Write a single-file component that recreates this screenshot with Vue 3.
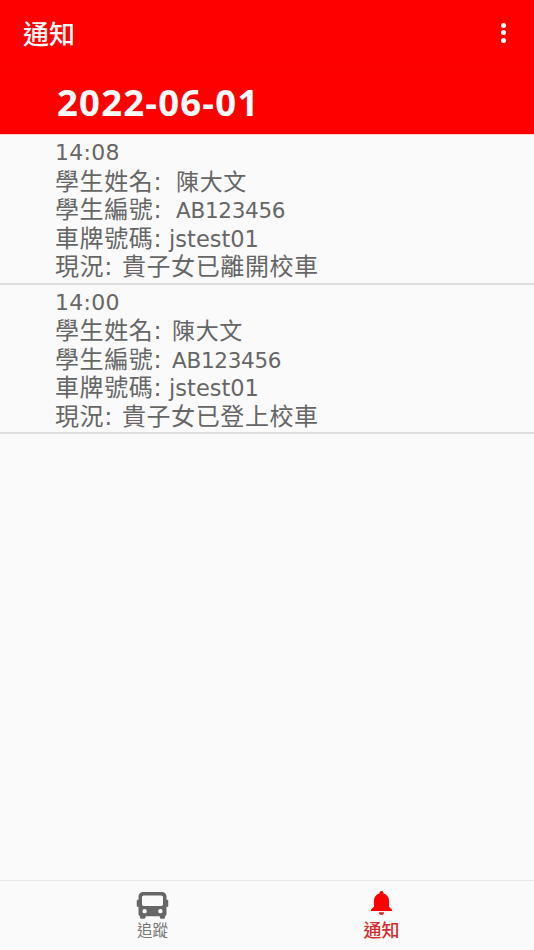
<template>
  <div class="page">
    <header class="app-bar">
      <span class="app-title">通知</span>
      <div class="more">
        <i></i><i></i><i></i>
      </div>
    </header>
    <div class="date-bar">2022-06-01</div>

    <main class="list">
      <div v-for="item in items" :key="item.time" class="item">
        <div class="row time">{{ item.time }}</div>
        <div class="row">學生姓名:<span class="name" :style="{ marginLeft: item.gap + 'px' }">陳大文</span></div>
        <div class="row">學生編號:<span class="code" :style="{ marginLeft: item.gap + 'px' }">AB123456</span></div>
        <div class="row">車牌號碼:<span class="plate">jstest01</span></div>
        <div class="row">現況:<span class="status">{{ item.status }}</span></div>
      </div>
    </main>

    <nav class="tabs">
      <div class="tab">
        <svg class="tab-icon" width="33" height="28" viewBox="0 0 36 32">
          <path fill="#666" fill-rule="evenodd" d="M8 1h20c3.500 0 6 2.200 6 5.500V10h1c.6 0 1 .4 1 1v6c0 .6-.4 1-1 1h-1v8c0 1.200-.6 2.200-1.600 2.700V30c0 1-.8 1.800-1.800 1.800h-2.400c-1 0-1.800-.8-1.800-1.800v-1.200H10V30c0 1-.8 1.800-1.800 1.800H5.400c-1 0-1.800-.8-1.800-1.800v-1.300C2.600 28.200 2 27.200 2 26v-8H1c-.6 0-1-.4-1-1v-6c0-.6.400-1 1-1h1V6.500C2 3.200 4.500 1 8 1zM8 5C6.900 5 6 5.900 6 7v8c0 1.100.9 2 2 2h20c1.100 0 2-.9 2-2V7c0-1.100-.9-2-2-2H8zM9 20.500a2.500 2.500 0 1 0 0 5 2.500 2.500 0 0 0 0-5zm18 0a2.500 2.500 0 1 0 0 5 2.500 2.500 0 0 0 0-5z"/>
        </svg>
        <span class="tab-label">追蹤</span>
      </div>
      <div class="tab active">
        <svg class="tab-icon bell" width="23" height="24" viewBox="0 0 26 27">
          <path fill="#f00" d="M13 0c1.300 0 2.300 1 2.300 2.300v.6C19.400 4 21.500 7.500 21.500 11.500v6.200L25 21v1.500H1V21l3.500-3.300v-6.200c0-4 2.100-7.500 6.200-8.600v-.6C10.700 1 11.700 0 13 0z"/>
          <path fill="#e02020" d="M10 24h6c0 1.700-1.300 3-3 3s-3-1.300-3-3z"/>
        </svg>
        <span class="tab-label">通知</span>
      </div>
    </nav>
  </div>
</template>

<script setup>
const items = [
  { time: '14:08', status: '貴子女已離開校車', gap: 14 },
  { time: '14:00', status: '貴子女已登上校車', gap: 10 }
]
</script>

<style>
html,
body {
  margin: 0;
  background: #fafafa;
}
</style>

<style scoped>
.page {
  display: flex;
  flex-direction: column;
  height: 950px;
  overflow: hidden;
  background: #fafafa;
  font-family: "DejaVu Sans", "Noto Sans CJK TC", sans-serif;
}

.app-bar {
  display: flex;
  align-items: center;
  justify-content: space-between;
  height: 68px;
  padding: 0 28px 2px 23px;
  background: #ff0000;
  border-bottom: 1px solid #f60000;
  box-sizing: border-box;
  color: #fff;
}

.app-title {
  font-family: "Noto Sans CJK TC", sans-serif;
  font-size: 26px;
  font-weight: 500;
}

.more {
  display: flex;
  flex-direction: column;
  gap: 2.500px;
}

.more i {
  width: 5px;
  height: 5px;
  border-radius: 50%;
  background: #fff;
}

.date-bar {
  height: 66px;
  padding-left: 57px;
  background: #ff0000;
  color: #fff;
  font-family: "Open Sans", sans-serif;
  font-size: 36.500px;
  font-weight: 700;
  letter-spacing: 1.200px;
  line-height: 68px;
  box-sizing: border-box;
}

.list {
  flex: 1;
  border-top: 1px solid #fbd0c8;
}

.item {
  height: 149.500px;
  padding: 4px 0 0 55px;
  border-bottom: 2px solid #dedede;
  box-sizing: border-box;
  color: #666;
  font-size: 24px;
  letter-spacing: 0.6px;
}

.row {
  height: 28.500px;
  line-height: 28.500px;
  white-space: nowrap;
}

.time {
  font-size: 22px;
  letter-spacing: 0.3px;
}

.name {
  font-size: 23px;
}

.code {
  font-size: 21.500px;
  letter-spacing: -0.3px;
}

.plate {
  margin-left: 7px;
  font-size: 22.500px;
  letter-spacing: 0;
}

.status {
  margin-left: 9px;
}

.tabs {
  display: flex;
  height: 70px;
  padding: 0 38px;
  border-top: 1px solid #eaeaea;
  box-sizing: border-box;
}

.tab {
  flex: 1;
  display: flex;
  flex-direction: column;
  align-items: center;
  color: #777;
}

.tab-icon {
  display: block;
  margin-top: 10px;
}

.bell {
  margin-bottom: 4px;
}

.tab-label {
  font-family: "Noto Sans CJK TC", sans-serif;
  font-size: 15.500px;
  line-height: 21px;
}

.active {
  color: #d32f2f;
}

.active .tab-label {
  font-size: 18px;
  font-weight: 500;
}
</style>
